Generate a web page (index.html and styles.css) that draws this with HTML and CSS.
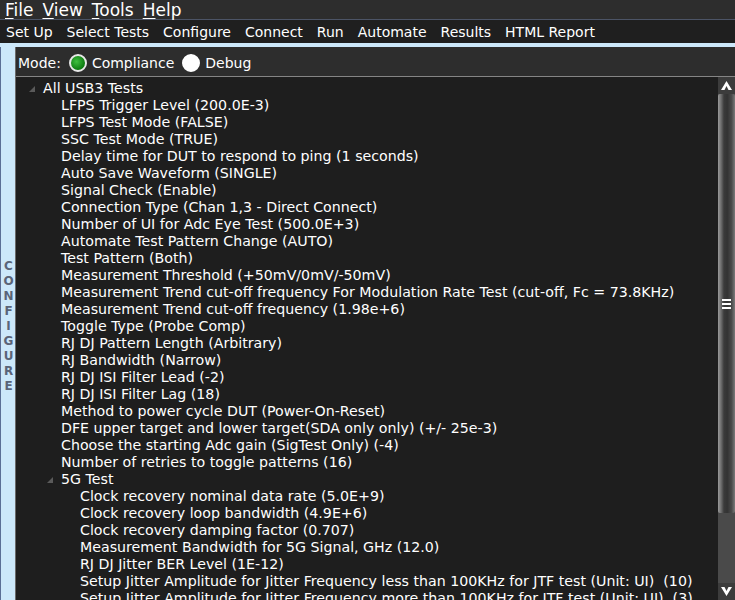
FILE: index.html
```html
<!DOCTYPE html>
<html lang="en">
<head>
    <meta charset="UTF-8">
    <title>USB3 Configure</title>
    <link rel="stylesheet" href="styles.css">
</head>
<body>
    <div class="menubar">
        <span class="menu-item"><u>F</u>ile</span>
        <span class="menu-item"><u>V</u>iew</span>
        <span class="menu-item"><u>T</u>ools</span>
        <span class="menu-item"><u>H</u>elp</span>
    </div>

    <div class="tabbar">
        <span class="tab">Set Up</span>
        <span class="tab">Select Tests</span>
        <span class="tab">Configure</span>
        <span class="tab">Connect</span>
        <span class="tab">Run</span>
        <span class="tab">Automate</span>
        <span class="tab">Results</span>
        <span class="tab">HTML Report</span>
    </div>

    <div class="main">
        <div class="side-label">CONFIGURE</div>

        <div class="panel">
            <div class="mode-row">
                <span>Mode:</span>
                <span class="radio checked"></span>
                <span>Compliance</span>
                <span class="radio"></span>
                <span>Debug</span>
            </div>

            <div class="tree-area">
                <div class="tree">
                    <div class="row lvl0"><span class="expander"><svg width="6" height="6" viewBox="0 0 6 6"><polygon points="6,0 6,6 0,6" fill="#5a5a5a"/></svg></span>All USB3 Tests</div>
                    <div class="row lvl1">LFPS Trigger Level (200.0E-3)</div>
                    <div class="row lvl1">LFPS Test Mode (FALSE)</div>
                    <div class="row lvl1">SSC Test Mode (TRUE)</div>
                    <div class="row lvl1">Delay time for DUT to respond to ping (1 seconds)</div>
                    <div class="row lvl1">Auto Save Waveform (SINGLE)</div>
                    <div class="row lvl1">Signal Check (Enable)</div>
                    <div class="row lvl1">Connection Type (Chan 1,3 - Direct Connect)</div>
                    <div class="row lvl1">Number of UI for Adc Eye Test (500.0E+3)</div>
                    <div class="row lvl1">Automate Test Pattern Change (AUTO)</div>
                    <div class="row lvl1">Test Pattern (Both)</div>
                    <div class="row lvl1">Measurement Threshold (+50mV/0mV/-50mV)</div>
                    <div class="row lvl1">Measurement Trend cut-off frequency For Modulation Rate Test (cut-off, Fc = 73.8KHz)</div>
                    <div class="row lvl1">Measurement Trend cut-off frequency (1.98e+6)</div>
                    <div class="row lvl1">Toggle Type (Probe Comp)</div>
                    <div class="row lvl1">RJ DJ Pattern Length (Arbitrary)</div>
                    <div class="row lvl1">RJ Bandwidth (Narrow)</div>
                    <div class="row lvl1">RJ DJ ISI Filter Lead (-2)</div>
                    <div class="row lvl1">RJ DJ ISI Filter Lag (18)</div>
                    <div class="row lvl1">Method to power cycle DUT (Power-On-Reset)</div>
                    <div class="row lvl1">DFE upper target and lower target(SDA only only) (+/- 25e-3)</div>
                    <div class="row lvl1">Choose the starting Adc gain (SigTest Only) (-4)</div>
                    <div class="row lvl1">Number of retries to toggle patterns (16)</div>
                    <div class="row lvl1"><span class="expander"><svg width="6" height="6" viewBox="0 0 6 6"><polygon points="6,0 6,6 0,6" fill="#5a5a5a"/></svg></span>5G Test</div>
                    <div class="row lvl2">Clock recovery nominal data rate (5.0E+9)</div>
                    <div class="row lvl2">Clock recovery loop bandwidth (4.9E+6)</div>
                    <div class="row lvl2">Clock recovery damping factor (0.707)</div>
                    <div class="row lvl2">Measurement Bandwidth for 5G Signal, GHz (12.0)</div>
                    <div class="row lvl2">RJ DJ Jitter BER Level (1E-12)</div>
                    <div class="row lvl2">Setup Jitter Amplitude for Jitter Frequency less than 100KHz for JTF test (Unit: UI)&nbsp; (10)</div>
                    <div class="row lvl2">Setup Jitter Amplitude for Jitter Frequency more than 100KHz for JTF test (Unit: UI)&nbsp; (3)</div>
                </div>

                <div class="scrollbar">
                    <div class="sb-btn">
                        <svg width="11" height="9" viewBox="0 0 11 9"><polygon points="5.5,0 11,9 7.5,9 5.5,5 3.5,9 0,9" fill="#fff"/></svg>
                    </div>
                    <div class="sb-thumb">
                        <div class="grip"></div>
                        <div class="grip"></div>
                        <div class="grip"></div>
                    </div>
                    <div class="sb-track"></div>
                    <div class="sb-btn">
                        <svg width="11" height="9" viewBox="0 0 11 9"><polygon points="5.5,9 11,0 7.5,0 5.5,4 3.5,0 0,0" fill="#fff"/></svg>
                    </div>
                </div>
            </div>
        </div>
    </div>
</body>
</html>
```

FILE: styles.css
```css
html, body {
    margin: 0;
    height: 100%;
    overflow: hidden;
}

body {
    font-family: 'DejaVu Sans', Verdana, sans-serif;
    background-color: #2d2d2d;
    color: #fff;
    display: flex;
    flex-direction: column;
}

.menubar {
    height: 19px;
    display: flex;
    align-items: center;
    padding-left: 5px;
    font-size: 17px;
    background-color: #2d2d2d;
    border-bottom: 1px solid #4c5466;
}

.menu-item {
    margin-right: 9px;
}

.menu-item u {
    text-decoration-thickness: 1px;
    text-underline-offset: 2px;
}

.tabbar {
    height: 23px;
    display: flex;
    align-items: center;
    padding-left: 6px;
    gap: 14px;
    font-size: 14px;
    background-color: #1f1f1f;
}

.main {
    flex: 1;
    display: flex;
    min-height: 0;
    padding-top: 4px;
    background-color: #cce8fa;
}

.side-label {
    width: 16px;
    border-left: 1px solid #5b6f96;
    border-right: 1px solid #6a6a6a;
    box-sizing: border-box;
    display: flex;
    align-items: center;
    justify-content: center;
    writing-mode: vertical-lr;
    text-orientation: upright;
    font-size: 12px;
    font-weight: bold;
    letter-spacing: 1px;
    color: #5a6478;
    padding-left: 1px;
    padding-top: 5px;
}

.panel {
    flex: 1;
    display: flex;
    flex-direction: column;
    min-width: 0;
    background-color: #2d2d2d;
}

.mode-row {
    height: 30px;
    display: flex;
    align-items: center;
    padding-left: 2px;
    gap: 5px;
    font-size: 14px;
    border-bottom: 1px solid #858585;
    padding-top: 2px;
    box-sizing: border-box;
}

.radio {
    width: 14px;
    height: 14px;
    border-radius: 50%;
    background-color: #fff;
    border: 2px solid #fff;
    margin-left: 3px;
}

.radio.checked {
    background: radial-gradient(circle at 40% 40%, #3fbf3f, #0c7a10 70%, #085c0b);
    border-color: #e8e8e8;
}

.tree-area {
    flex: 1;
    display: flex;
    min-height: 0;
    background-color: #1e1e1e;
}

.tree {
    flex: 1;
    padding-top: 3px;
    font-size: 14.2px;
    overflow: hidden;
}

.row {
    height: 17px;
    line-height: 17px;
    white-space: nowrap;
}

.lvl0 { padding-left: 27px; }
.lvl1 { padding-left: 45px; }
.lvl2 { padding-left: 64px; }

.expander {
    display: inline-block;
    width: 0;
    position: relative;
    left: -14px;
    top: -1px;
}

.scrollbar {
    width: 17px;
    display: flex;
    flex-direction: column;
    background-color: #4a4a4a;
}

.sb-btn {
    height: 17px;
    display: flex;
    align-items: center;
    justify-content: center;
    background-color: #3c3c3c;
}

.sb-thumb {
    height: 419px;
    display: flex;
    flex-direction: column;
    align-items: center;
    justify-content: center;
    gap: 2px;
    background: linear-gradient(to right, #9a9a9a 0, #6e6e6e 18%, #3a3a3a 35%, #333 55%, #4a4a4a 80%, #7a7a7a 100%);
    border-radius: 2px;
}

.grip {
    width: 9px;
    height: 2px;
    background-color: #fff;
}

.sb-track {
    flex: 1;
}
```
